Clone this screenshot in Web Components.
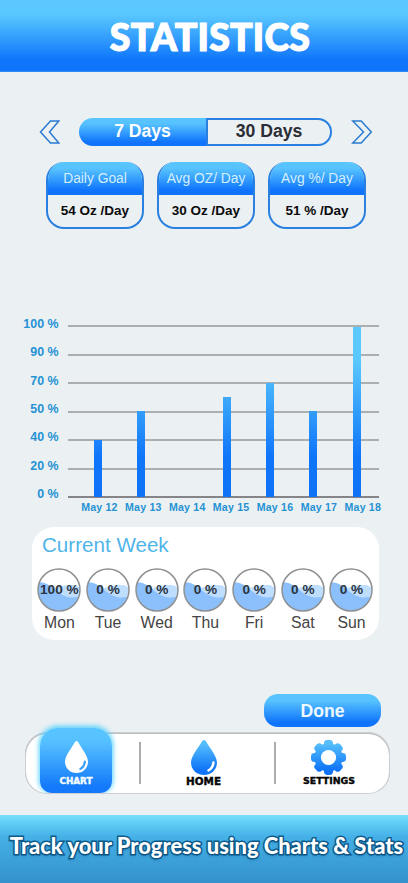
<!DOCTYPE html>
<html lang="en">
<head>
<meta charset="UTF-8">
<meta name="viewport" content="width=device-width, initial-scale=1.0">
<title>Statistics</title>
<style>
    html, body {
        margin: 0;
        padding: 0;
    }
    body {
        width: 408px;
        height: 883px;
        overflow: hidden;
        background: #ebf0f3;
        font-family: "Liberation Sans", Arial, sans-serif;
        --blue-fade: linear-gradient(to bottom, #5ac6ff 0%, #57c2ff 20%, #0f74fb 86%, #0f74fb 100%);
        --outline: #2a80e0;
    }
</style>
</head>
<body>
<stats-app></stats-app>

<script>
class BaseElement extends HTMLElement {
    constructor() {
        super();
        this.attachShadow({ mode: 'open' });
    }

    connectedCallback() {
        this.shadowRoot.innerHTML = this.render();
    }
}

class PageHeader extends BaseElement {
    render() {
        return `
            <style>
                :host {
                    display: flex;
                    justify-content: center;
                    height: 72px;
                    box-sizing: border-box;
                    background: linear-gradient(to bottom, #5ac8ff 0, #5ac8ff 14px, #0f76fb 60px, #0f76fb 71px, #5b9ff2 72px);
                }
                h1 {
                    margin: 0;
                    padding-left: 12px;
                    font: 900 37.5px/73px Lato, sans-serif;
                    letter-spacing: 0.2px;
                    color: #fff;
                    -webkit-text-stroke: 1.2px #fff;
                    white-space: nowrap;
                }
            </style>
            <h1><slot></slot></h1>
        `;
    }
}
customElements.define('page-header', PageHeader);

class RangeSwitch extends BaseElement {
    render() {
        return `
            <style>
                :host {
                    display: flex;
                    align-items: center;
                    justify-content: space-between;
                    height: 28px;
                    padding: 0 35px 0 38px;
                }
                svg { display: block; }
                .track {
                    display: flex;
                    width: 253px;
                    height: 28px;
                }
                .option {
                    box-sizing: border-box;
                    height: 28px;
                    font-weight: bold;
                    text-align: center;
                    line-height: 26px;
                    font-size: 17.6px;
                }
                .active {
                    width: 127px;
                    border-radius: 14px 0 0 14px;
                    background: var(--blue-fade);
                    color: #fff;
                }
                .other {
                    width: 126px;
                    border: 2px solid var(--outline);
                    border-radius: 0 14px 14px 0;
                    line-height: 23px;
                    color: #2a2d33;
                }
            </style>
            <svg width="22" height="26" viewBox="0 0 22 26"><path d="M20.8 2H12.5L2.5 13L12.5 24H20.8L11.5 13Z" fill="none" stroke="#2a7bd0" stroke-width="1.5"/></svg>
            <div class="track">
                <div class="option active">7 Days</div>
                <div class="option other">30 Days</div>
            </div>
            <svg width="22" height="26" viewBox="0 0 22 26"><path d="M1.7 2H10.2L20.3 13L10.2 24H1.7L12.5 13Z" fill="none" stroke="#2a7bd0" stroke-width="1.5"/></svg>
        `;
    }
}
customElements.define('range-switch', RangeSwitch);

class SummaryCard extends BaseElement {
    render() {
        return `
            <style>
                :host {
                    display: block;
                    box-sizing: border-box;
                    width: 98px;
                    height: 67px;
                    border: 2px solid var(--outline);
                    border-top: 0;
                    border-radius: 18px;
                    overflow: hidden;
                    text-align: center;
                    white-space: nowrap;
                }
                .title {
                    height: 33px;
                    margin: 0 -2px;
                    background: var(--blue-fade);
                    font-size: 13.8px;
                    line-height: 34px;
                    color: #d3effd;
                }
                .value {
                    font-size: 13.5px;
                    font-weight: bold;
                    line-height: 31px;
                    color: #0a0a0a;
                }
            </style>
            <div class="title">${this.getAttribute('label')}</div>
            <div class="value"><slot></slot></div>
        `;
    }
}
customElements.define('summary-card', SummaryCard);

class BarChart extends BaseElement {
    render() {
        const ticks = [100, 90, 70, 50, 40, 20, 0];
        // bar height in px on the 171px plot
        const days = [
            ['May 12', 57],
            ['May 13', 86],
            ['May 14', 0],
            ['May 15', 100],
            ['May 16', 114],
            ['May 17', 86],
            ['May 18', 170]
        ];
        return `
            <style>
                :host {
                    display: grid;
                    grid-template-columns: 58.5px 311px;
                    column-gap: 9.5px;
                    font-weight: bold;
                    color: #2592d3;
                    white-space: nowrap;
                }
                .ticks {
                    display: flex;
                    flex-direction: column;
                    justify-content: space-between;
                    height: 184px;
                    margin: -8px 0 -3px;
                    text-align: right;
                    font-size: 12.4px;
                    line-height: 14px;
                }
                .plot {
                    display: grid;
                    height: 173px;
                }
                .lines, .bars { grid-area: 1 / 1; }
                .lines {
                    display: flex;
                    flex-direction: column;
                    justify-content: space-between;
                }
                .lines i {
                    height: 2px;
                    background: #acafb2;
                }
                .lines i:last-child { background: #858488; }
                .bars {
                    display: flex;
                    align-items: flex-end;
                    gap: 35.1px;
                    padding: 0 0 1px 26px;
                }
                .bars i {
                    width: 8px;
                    background: linear-gradient(to bottom, #5bc8ff 0, #5bc8ff 35px, #0f76f9 130px, #0f72f6 171px) bottom / 100% 171px no-repeat;
                }
                .days {
                    grid-column: 2;
                    display: grid;
                    grid-template-columns: repeat(7, 43.9px);
                    margin: 3px 0 0 9.5px;
                    text-align: center;
                    font-size: 10.6px;
                    letter-spacing: 0.2px;
                    line-height: 12px;
                }
            </style>
            <div class="ticks">${ticks.map(t => `<span>${t} %</span>`).join('')}</div>
            <div class="plot">
                <div class="lines">${ticks.map(() => '<i></i>').join('')}</div>
                <div class="bars">${days.map(d => `<i style="height:${d[1]}px"></i>`).join('')}</div>
            </div>
            <div class="days">${days.map(d => `<span>${d[0]}</span>`).join('')}</div>
        `;
    }
}
customElements.define('bar-chart', BarChart);

class DayGauge extends BaseElement {
    render() {
        return `
            <style>
                :host {
                    display: flex;
                    flex-direction: column;
                    align-items: center;
                    width: 48.7px;
                    white-space: nowrap;
                }
                .gauge { display: grid; place-items: center; }
                .gauge > * { grid-area: 1 / 1; }
                svg { display: block; }
                .value {
                    font-size: 13.6px;
                    font-weight: bold;
                    color: #2b3440;
                }
                .day {
                    margin-top: 2px;
                    font-size: 15.8px;
                    line-height: 18px;
                    color: #444;
                }
            </style>
            <div class="gauge">
                <svg width="44" height="44" viewBox="0 0 44 44">
                    <defs><clipPath id="c"><circle cx="22" cy="22" r="20.8"/></clipPath></defs>
                    <circle cx="22" cy="22" r="21" fill="#fff"/>
                    <g clip-path="url(#c)">
                        <path d="M0 14.5C8 13 13 18 19 22C25 27 32 31 44 28V44H0Z" fill="#8bc0fc"/>
                        <path d="M17 20.5C23 18 30 16.5 36 17C40 17.3 42 19 44 22V27C36 32 27 29.5 17 20.5Z" fill="#bfdefe"/>
                    </g>
                    <circle cx="22" cy="22" r="21" fill="none" stroke="#8e9093" stroke-width="1.5"/>
                </svg>
                <span class="value">${this.getAttribute('value')} %</span>
            </div>
            <span class="day"><slot></slot></span>
        `;
    }
}
customElements.define('day-gauge', DayGauge);

class WeekPanel extends BaseElement {
    render() {
        return `
            <style>
                :host {
                    display: block;
                    box-sizing: border-box;
                    width: 347px;
                    height: 113px;
                    padding: 6px 0 0 3px;
                    border-radius: 22px;
                    background: #fff;
                }
                h2 {
                    margin: 0 0 10.5px 7px;
                    font-size: 20.6px;
                    font-weight: normal;
                    line-height: 24px;
                    color: #4fb5e9;
                }
                .row { display: flex; }
            </style>
            <h2>Current Week</h2>
            <div class="row"><slot></slot></div>
        `;
    }
}
customElements.define('week-panel', WeekPanel);

class DoneButton extends BaseElement {
    render() {
        return `
            <style>
                :host { display: block; }
                button {
                    display: block;
                    width: 117px;
                    height: 33px;
                    padding: 0;
                    border: 0;
                    border-radius: 14px;
                    background: var(--blue-fade);
                    color: #eef8ff;
                    font: bold 17.6px/32px "Liberation Sans", Arial, sans-serif;
                }
            </style>
            <button><slot></slot></button>
        `;
    }
}
customElements.define('done-button', DoneButton);

class NavItem extends BaseElement {
    icon() {
        const type = this.getAttribute('icon');
        const active = this.hasAttribute('active');
        const fill = active ? '#fff' : 'url(#g)';
        const shine = active ? '#3c9dfb' : '#fff';
        const defs = '<defs><linearGradient id="g" x1="0" y1="0" x2="0" y2="1"><stop offset="0.1" stop-color="#56bffc"/><stop offset="0.85" stop-color="#0f74f8"/></linearGradient></defs>';
        if (type === 'gear') {
            const teeth = [0, 45, 90, 135].map(a => `<rect x="13" y="0" width="9" height="35" rx="3.4" transform="rotate(${a} 17.5 17.5)" fill="#fff"/>`).join('');
            return `<svg width="35" height="35" viewBox="0 0 35 35">${defs}
                <mask id="m">${teeth}<circle cx="17.5" cy="17.5" r="14.2" fill="#fff"/><circle cx="17.5" cy="17.5" r="7.6" fill="#000"/></mask>
                <rect width="35" height="35" fill="url(#g)" mask="url(#m)"/>
            </svg>`;
        }
        const w = active ? 23 : 26;
        const h = active ? 32 : 35;
        return `<svg width="${w}" height="${h}" viewBox="0 0 26 35" preserveAspectRatio="none">${defs}
            <path d="M13 0C14 0 14.7 0.9 15.4 2.1C18.6 7.9 26 16 26 22.8C26 29.6 20.2 35 13 35S0 29.6 0 22.8C0 16 7.4 7.9 10.6 2.1C11.3 0.9 12 0 13 0Z" fill="${fill}"/>
            <path d="M22.4 22.6C22.1 26.2 20.4 28.8 17.4 30.5" fill="none" stroke="${shine}" stroke-width="2.5" stroke-linecap="round"/>
        </svg>`;
    }

    render() {
        return `
            <style>
                :host {
                    display: flex;
                    flex-direction: column;
                    align-items: center;
                    box-sizing: border-box;
                    height: 61px;
                    padding-top: 8px;
                    font-family: "DejaVu Sans", sans-serif;
                    font-weight: bold;
                    line-height: 12px;
                    color: #050505;
                    white-space: nowrap;
                }
                :host([active]) {
                    width: 72px;
                    height: 65px;
                    margin-top: -4px;
                    padding-top: 13px;
                    border-radius: 18px 18px 12px 12px;
                    background: linear-gradient(to bottom, #58c5ff 0, #55c0ff 22%, #1479fa 90%);
                    box-shadow: 0 -1px 5px 1px #52d1fb;
                    clip-path: inset(-8px -8px 0 -8px);
                    color: #f4fbff;
                }
                svg { display: block; flex: none; }
                .label {
                    font-size: var(--label-size, 10px);
                    -webkit-text-stroke: 0.4px currentColor;
                }
                :host([active]) .label { margin-top: 2px; }
            </style>
            ${this.icon()}
            <span class="label"><slot></slot></span>
        `;
    }
}
customElements.define('nav-item', NavItem);

class TabBar extends BaseElement {
    render() {
        return `
            <style>
                :host {
                    display: grid;
                    grid-template-columns: 114px 137px 114px;
                    justify-items: center;
                    box-sizing: border-box;
                    width: 365px;
                    height: 62px;
                    border-radius: 22px;
                    background: #fff;
                    box-shadow: inset 0 0 0 1px #cdced1, inset 0 1px 0 1px #bdbec2;
                }
                .cell {
                    display: flex;
                    justify-content: center;
                    width: 100%;
                    height: 62px;
                }
                .middle {
                    align-self: center;
                    align-items: center;
                    box-sizing: border-box;
                    height: 42px;
                    border-left: 2px solid #acadb0;
                    border-right: 2px solid #acadb0;
                }
            </style>
            <div class="cell"><slot name="left"></slot></div>
            <div class="cell middle"><slot name="middle"></slot></div>
            <div class="cell"><slot name="right"></slot></div>
        `;
    }
}
customElements.define('tab-bar', TabBar);

class PromoBanner extends BaseElement {
    render() {
        return `
            <style>
                :host {
                    display: block;
                    height: 68px;
                    background: linear-gradient(to bottom, #78dffc 0, #5fcdf5 8px, #45b0e6 22px, #3ea4dc 40px, #3591cb 68px);
                    text-align: center;
                }
                p {
                    margin: 0;
                    padding-left: 5px;
                    font: 900 21.9px/61px Lato, sans-serif;
                    color: #fff;
                    white-space: nowrap;
                    -webkit-text-stroke: 3px #0e5c8c;
                    paint-order: stroke fill;
                    text-shadow: 0 2px 3px rgba(10, 70, 120, 0.4);
                }
            </style>
            <p><slot></slot></p>
        `;
    }
}
customElements.define('promo-banner', PromoBanner);

class StatsApp extends BaseElement {
    render() {
        return `
            <style>
                :host {
                    display: flex;
                    flex-direction: column;
                    width: 408px;
                    height: 883px;
                }
                range-switch { margin-top: 46px; }
                .cards {
                    display: flex;
                    gap: 13px;
                    margin: 16px 0 0 46px;
                }
                bar-chart { margin-top: 96px; }
                week-panel { margin: 14px 0 0 32px; }
                done-button { margin: 54px 0 0 264px; }
                tab-bar { margin: 5px 0 0 25px; }
                .chart { margin-left: -12px; --label-size: 8.8px; }
                .home { margin-left: -8px; padding-top: 7px; --label-size: 10.4px; }
                .settings { margin-left: -8px; --label-size: 9.4px; }
                promo-banner { margin-top: auto; }
            </style>
            <page-header>STATISTICS</page-header>
            <range-switch></range-switch>
            <div class="cards">
                <summary-card label="Daily Goal">54 Oz /Day</summary-card>
                <summary-card label="Avg OZ/ Day">30 Oz /Day</summary-card>
                <summary-card label="Avg %/ Day">51 % /Day</summary-card>
            </div>
            <bar-chart></bar-chart>
            <week-panel>
                <day-gauge value="100">Mon</day-gauge>
                <day-gauge value="0">Tue</day-gauge>
                <day-gauge value="0">Wed</day-gauge>
                <day-gauge value="0">Thu</day-gauge>
                <day-gauge value="0">Fri</day-gauge>
                <day-gauge value="0">Sat</day-gauge>
                <day-gauge value="0">Sun</day-gauge>
            </week-panel>
            <done-button>Done</done-button>
            <tab-bar>
                <nav-item slot="left" class="chart" icon="drop" active>CHART</nav-item>
                <nav-item slot="middle" class="home" icon="drop">HOME</nav-item>
                <nav-item slot="right" class="settings" icon="gear">SETTINGS</nav-item>
            </tab-bar>
            <promo-banner>Track your Progress using Charts &amp; Stats</promo-banner>
        `;
    }
}
customElements.define('stats-app', StatsApp);
</script>
</body>
</html>
